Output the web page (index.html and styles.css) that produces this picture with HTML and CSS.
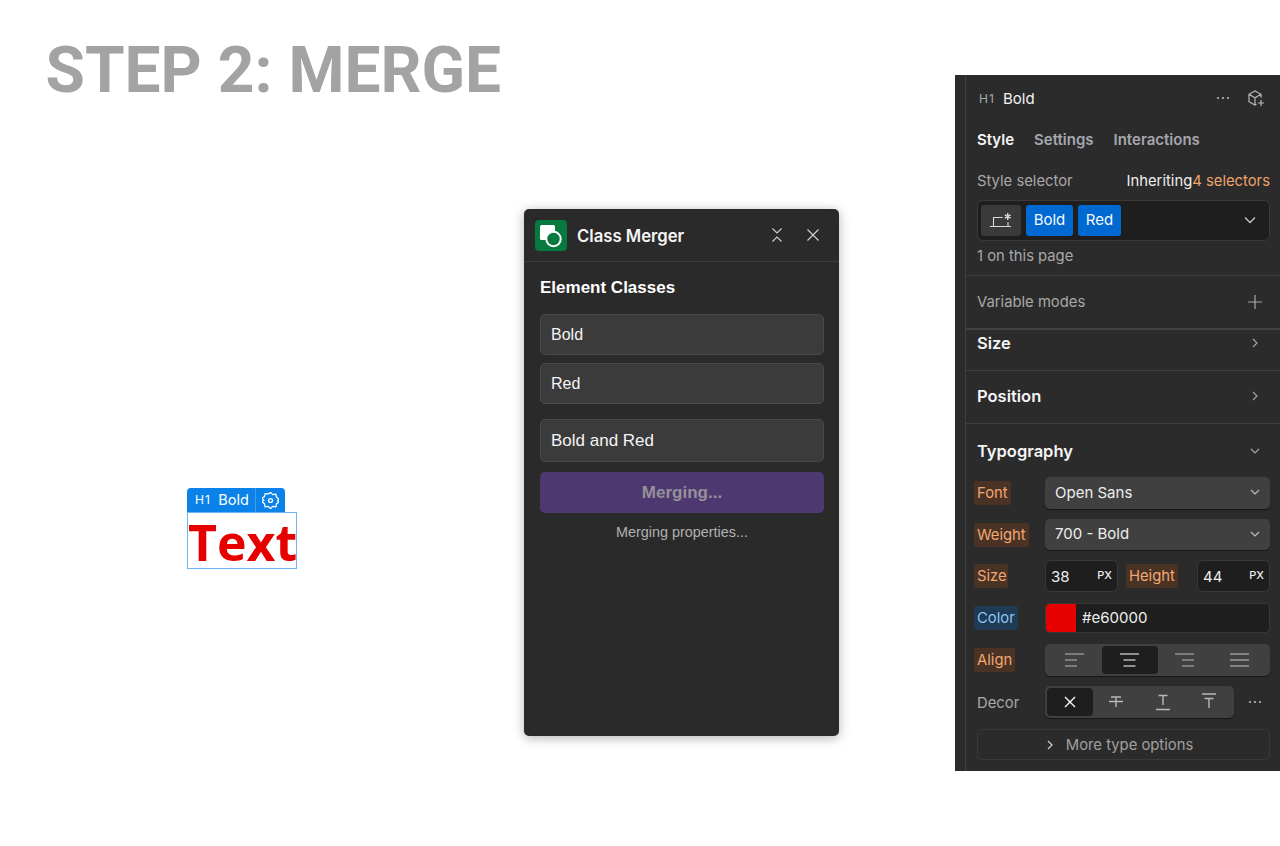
FILE: index.html
```html
<!DOCTYPE html>
<html lang="en">
<head>
<meta charset="utf-8">
<title>Step 2: Merge</title>
<link rel="stylesheet" href="styles.css">
</head>
<body>
<h1 class="title">STEP 2: MERGE</h1>

<div class="canvas-el">
  <div class="el-tag">
    <span class="el-tag-name"><span class="el-h1">H1</span><span>Bold</span></span>
    <span class="el-tag-gear">
      <svg width="17" height="17" viewBox="1.500 1.500 13 13" fill="none" stroke="#fff" stroke-width="1" stroke-linejoin="round"><path d="M8 1.800l1.700 1.700 2.400-.3.500 2.300 2 1.500-1.200 1 1.200 1-2 1.500-.5 2.300-2.400-.3L8 14.200l-1.700-1.700-2.400.3-.5-2.300-2-1.500L3 8 1.400 6.500l2-1.500.5-2.300 2.400.3z"/><circle cx="8" cy="8" r="1.500"/></svg>
    </span>
  </div>
  <div class="el-box">Text</div>
</div>

<section class="plugin">
  <header class="plugin-head">
    <span class="plugin-logo">
      <svg width="32" height="31" viewBox="0 0 32 31"><rect width="32" height="31" rx="4" fill="#067a3e"/><rect x="5" y="5" width="15" height="15" rx="1.500" fill="#fff"/><circle cx="18.500" cy="19" r="7.200" fill="#067a3e" stroke="#fff" stroke-width="2"/></svg>
    </span>
    <span class="plugin-title">Class Merger</span>
    <svg class="plugin-collapse" width="12" height="16" viewBox="0 0 12 16" fill="none" stroke="#d0d0d0" stroke-width="1.100"><path d="M1.500 1.500 6 6l4.500-4.500M1.500 14.500 6 10l4.500 4.500"/></svg>
    <svg class="plugin-close" width="14" height="14" viewBox="0 0 14 14" fill="none" stroke="#d0d0d0" stroke-width="1.200"><path d="M1.500 1.500l11 11M12.500 1.500l-11 11"/></svg>
  </header>
  <div class="plugin-body">
    <h2 class="plugin-h">Element Classes</h2>
    <div class="plugin-field">Bold</div>
    <div class="plugin-field plugin-field-red">Red</div>
    <div class="plugin-field plugin-field-name">Bold and Red</div>
    <button class="plugin-btn">Merging...</button>
    <p class="plugin-status">Merging properties...</p>
  </div>
</section>

<aside class="panel">
  <div class="panel-inner">
    <div class="p-head">
      <span class="p-h1">H1</span>
      <span class="p-name">Bold</span>
      <svg class="p-dots" width="14" height="4" viewBox="0 0 14 4" fill="#b8b8b8"><circle cx="2" cy="2" r="1.100"/><circle cx="7" cy="2" r="1.100"/><circle cx="12" cy="2" r="1.100"/></svg>
      <svg class="p-cube" width="18" height="18" viewBox="0 0 18 18" fill="none" stroke="#b8b8b8" stroke-width="1.200"><path d="M9.500 15.300 8 16 2 12.700V5.300L8 2l6 3.300v3.500M2 5.300 8 8.700l6-3.400M8 8.700V16M14 11v6M11 14h6"/></svg>
    </div>
    <nav class="p-tabs"><span class="tab tab-on">Style</span><span class="tab">Settings</span><span class="tab">Interactions</span></nav>
    <div class="p-sel-label"><span>Style selector</span><span class="p-inherit">Inheriting<em>4 selectors</em></span></div>
    <div class="p-sel">
      <span class="chip-state">
        <svg width="26" height="18" viewBox="0 0 24 18" fill="none" stroke="#d8d8d8" stroke-width="1.100"><path d="M1 15.500h21M4.500 15.500V6.500h9M19 11v4.500"/><path d="M18.700 2v7M15.800 3.800l5.800 3.400M21.600 3.800l-5.800 3.400" stroke-width="1.400"/></svg>
      </span>
      <span class="chip">Bold</span>
      <span class="chip chip-red">Red</span>
      <svg class="p-sel-caret" width="12" height="8" viewBox="0 0 12 8" fill="none" stroke="#c8c8c8" stroke-width="1.300"><path d="M1 1.500 6 6.500l5-5"/></svg>
    </div>
    <div class="p-count">1 on this page</div>
    <div class="p-modes">
      <span>Variable modes</span>
      <svg width="16" height="16" viewBox="0 0 16 16" fill="none" stroke="#a8a8a8" stroke-width="1.200"><path d="M8 1v14M1 8h14"/></svg>
    </div>
    <div class="p-sect p-sect-size"><span>Size</span><svg width="6" height="10" viewBox="0 0 6 10" fill="none" stroke="#a8a8a8" stroke-width="1.100"><path d="M1 1l4 4-4 4"/></svg></div>
    <div class="p-sect p-sect-pos"><span>Position</span><svg width="6" height="10" viewBox="0 0 6 10" fill="none" stroke="#a8a8a8" stroke-width="1.100"><path d="M1 1l4 4-4 4"/></svg></div>
    <div class="p-sect p-sect-typo"><span>Typography</span><svg width="10" height="6" viewBox="0 0 10 6" fill="none" stroke="#a8a8a8" stroke-width="1.100"><path d="M1 1l4 4 4-4"/></svg></div>

    <div class="rows">
      <div class="row row-font">
        <span class="lbl lbl-o lbl-first">Font</span>
        <div class="select">Open Sans<svg width="10" height="6" viewBox="0 0 10 6" fill="none" stroke="#c0c0c0" stroke-width="1.100"><path d="M1 1l4 4 4-4"/></svg></div>
      </div>
      <div class="row row-weight">
        <span class="lbl lbl-o lbl-first">Weight</span>
        <div class="select">700 - Bold<svg width="10" height="6" viewBox="0 0 10 6" fill="none" stroke="#c0c0c0" stroke-width="1.100"><path d="M1 1l4 4 4-4"/></svg></div>
      </div>
      <div class="row row-size">
        <span class="lbl lbl-o lbl-size">Size</span>
        <div class="num num-size"><span>38</span><small>PX</small></div>
        <span class="lbl lbl-o lbl-height">Height</span>
        <div class="num"><span>44</span><small>PX</small></div>
      </div>
      <div class="row row-color">
        <span class="lbl lbl-b lbl-first">Color</span>
        <div class="color"><span class="swatch"></span><span class="hex">#e60000</span></div>
      </div>
      <div class="row row-align">
        <span class="lbl lbl-o lbl-first">Align</span>
        <div class="seg seg-align">
          <span class="seg-i"><svg width="20" height="14" viewBox="0 0 20 14" stroke="#b8b8b8" stroke-width="1.200"><path d="M0 1h19M0 7h12M0 13h12"/></svg></span>
          <span class="seg-i seg-on"><svg width="20" height="14" viewBox="0 0 20 14" stroke="#fff" stroke-width="1.200"><path d="M0 1h19M3.500 7h12M3.500 13h12"/></svg></span>
          <span class="seg-i"><svg width="20" height="14" viewBox="0 0 20 14" stroke="#b8b8b8" stroke-width="1.200"><path d="M0 1h19M7 7h12M7 13h12"/></svg></span>
          <span class="seg-i"><svg width="20" height="14" viewBox="0 0 20 14" stroke="#c8c8c8" stroke-width="1.200"><path d="M0 1h19M0 7h19M0 13h19"/></svg></span>
        </div>
      </div>
      <div class="row row-decor">
        <span class="lbl lbl-first">Decor</span>
        <div class="seg seg-decor">
          <span class="seg-i seg-on"><svg width="12" height="12" viewBox="0 0 12 12" fill="none" stroke="#fff" stroke-width="1.300"><path d="M1 1l10 10M11 1 1 11"/></svg></span>
          <span class="seg-i"><svg width="16" height="14" viewBox="0 0 16 14" fill="none" stroke="#b8b8b8" stroke-width="1.400"><path d="M3 2h10M1 6.500h14M8 2v10"/></svg></span>
          <span class="seg-i"><svg width="16" height="18" viewBox="0 0 16 18" fill="none" stroke="#b8b8b8" stroke-width="1.400"><path d="M3.500 2.500h9M8 2.500V12M1 16.500h14"/></svg></span>
          <span class="seg-i"><svg width="16" height="18" viewBox="0 0 16 18" fill="none" stroke="#b8b8b8" stroke-width="1.400"><path d="M1 1h14M3.500 5.500h9M8 5.500V15"/></svg></span>
        </div>
        <svg class="decor-dots" width="14" height="4" viewBox="0 0 14 4" fill="#b8b8b8"><circle cx="2" cy="2" r="1.100"/><circle cx="7" cy="2" r="1.100"/><circle cx="12" cy="2" r="1.100"/></svg>
      </div>
      <div class="more"><svg width="6" height="10" viewBox="0 0 6 10" fill="none" stroke="#d0d0d0" stroke-width="1.200"><path d="M1 1l4 4-4 4"/></svg><span>More type options</span></div>
    </div>
  </div>
</aside>
</body>
</html>
```
FILE: styles.css
```css
* { box-sizing: border-box; }
html, body { margin: 0; padding: 0; }
body { width: 1280px; height: 846px; background: #fff; position: relative; overflow: hidden; font-family: "Inter", "Liberation Sans", sans-serif; }

.title { position: absolute; left: 45.500px; top: 33px; margin: 0; font: 700 64px/76px "Roboto", sans-serif; color: #a3a3a3; white-space: nowrap; }

.canvas-el { position: absolute; left: 187px; top: 488px; width: 110px; }
.el-tag { display: flex; width: 98px; height: 24px; background: #0a82ea; border-radius: 4px 4px 0 0; color: #fff; font: 400 14.500px/22px "Inter", sans-serif; }
.el-tag-name { display: flex; align-items: center; gap: 7px; padding-left: 8px; width: 69px; border-right: 1px solid #3f9df0; }
.el-h1 { font-size: 12px; letter-spacing: 1.200px; }
.el-tag-gear { flex: 1; display: flex; align-items: center; justify-content: center; }
.el-box { height: 57px; padding-top: 6px; border: 1px solid #6db4f5; color: #e60000; font: 700 50px/46px "Open Sans", sans-serif; text-align: center; white-space: nowrap; }

.plugin { position: absolute; left: 524px; top: 209px; width: 315px; height: 527px; background: #2a2a2a; border-radius: 5px; box-shadow: 0 2px 12px rgba(0,0,0,.3); font-family: "Liberation Sans", sans-serif; color: #f5f5f5; }
.plugin-head { display: flex; align-items: center; height: 53px; padding: 0 19px 0 11px; border-bottom: 1px solid #3c3c3c; }
.plugin-logo { display: flex; margin-right: 10px; }
.plugin-title { font: 600 16.700px/20px "Inter", "Liberation Sans", sans-serif; flex: 1; padding-top: 2px; }
.plugin-collapse { margin-right: 23px; }
.plugin-body { padding: 16px 15px 0 16px; }
.plugin-h { margin: 0 0 16px; font-size: 17px; line-height: 20px; font-weight: 700; color: #fff; }
.plugin-field { height: 41px; padding: 0 10px; background: #3b3b3b; border: 1px solid #4a4a4a; border-radius: 5px; font-size: 16px; line-height: 39px; color: #f4f4f4; margin-bottom: 8px; }
.plugin-field-red { margin-bottom: 15px; }
.plugin-field-name { height: 43px; font-size: 17px; line-height: 41px; margin-bottom: 10px; }
.plugin-btn { display: block; width: 100%; height: 41px; border: 0; border-radius: 5px; background: #4d3870; color: #969198; font: 700 17px/41px "Liberation Sans", sans-serif; padding: 0; }
.plugin-status { margin: 11px 0 0; text-align: center; font-size: 14.400px; line-height: 16px; color: #b0b0b0; }

.panel { position: absolute; left: 955px; top: 75px; width: 325px; height: 696px; background: #2b2b2b; padding-left: 10px; color: #bdbdbd; font-size: 14.800px; }
.panel-inner { height: 100%; border-left: 1px solid #3f3f3f; }
.p-head { display: flex; align-items: center; height: 45px; padding: 1px 15px 0 13px; }
.p-h1 { font-size: 12px; letter-spacing: 1.200px; color: #a8a8a8; width: 24px; }
.p-name { flex: 1; color: #f2f2f2; font-size: 15px; }
.p-dots { margin-right: 17px; }
.p-tabs { display: flex; gap: 20px; height: 36px; align-items: center; padding: 2px 0 0 11px; font-size: 15px; font-weight: 600; color: #a6a6ae; }
.tab-on { color: #f5f5f5; }
.p-sel-label { display: flex; justify-content: space-between; align-items: center; height: 24px; margin-top: 12px; padding: 2px 10px 0 11px; color: #a8a8a8; }
.p-inherit { color: #eee; font-size: 14.800px; }
.p-inherit em { font-style: normal; color: #f0a36b; }
.p-sel { display: flex; align-items: center; gap: 5px; margin: 8px 10px 0 11px; height: 41px; padding: 0 4px 1px 3px; background: #1e1e1e; border: 1px solid #3a3a3a; border-radius: 6px; }
.chip-state { display: flex; align-items: center; justify-content: center; width: 40px; height: 31px; background: #3a3a3a; border-radius: 3px; }
.chip { width: 47px; height: 31px; background: #0069d1; border-radius: 3px; color: #f4f8ff; text-align: center; line-height: 30px; font-size: 15px; }
.chip-red { width: 43px; }
.p-sel-caret { margin-left: auto; margin-right: 9px; }
.p-count { height: 35px; line-height: 30px; padding-left: 11px; color: #a8a8a8; border-bottom: 1px solid #3f3f3f; }
.p-modes { display: flex; align-items: center; justify-content: space-between; height: 54px; padding: 0 17px 1px 11px; color: #a8a8a8; border-bottom: 2px solid #414141; }
.p-sect { display: flex; align-items: center; justify-content: space-between; padding: 0 22px 0 11px; font-size: 16.500px; font-weight: 600; color: #f5f5f5; }
.p-sect-size { height: 41px; padding-bottom: 14px; border-bottom: 1px solid #3f3f3f; }
.p-sect-pos { height: 53px; padding-bottom: 2px; border-bottom: 1px solid #3f3f3f; }
.p-sect-typo { height: 53px; padding-right: 20px; }

.rows { padding: 0 10px 0 8px; }
.row { display: flex; align-items: center; }
.row-font { height: 32px; }
.row-weight { height: 31px; margin-top: 10px; }
.row-size { height: 32px; margin-top: 10px; }
.row-color { height: 30px; margin-top: 11px; }
.row-align { height: 32px; margin-top: 11px; }
.row-decor { height: 32px; margin-top: 10px; }
.lbl { display: inline-block; height: 24px; padding: 0 3px; line-height: 24px; border-radius: 2px; color: #a8a8a8; }
.lbl-o { background: #4a3225; color: #f2a873; }
.lbl-b { background: #1f3a55; color: #8ec3f2; }
.lbl-first { margin-right: auto; }
.row-decor .lbl-first { width: 71px; margin-right: 0; padding-top: 1px; }
.select { display: flex; align-items: center; justify-content: space-between; width: 225px; height: 100%; padding: 0 10px 2px; background: #404040; border-radius: 5px; box-shadow: 0 1px 1px rgba(0,0,0,.5); color: #eee; font-size: 15px; }
.num { display: flex; align-items: center; justify-content: space-between; width: 73px; height: 32px; padding: 0 5px; background: #1e1e1e; border: 1px solid #383838; border-radius: 6px; color: #eee; font-size: 15px; }
.num small { font-size: 11px; font-weight: 500; margin-bottom: 2px; }
.lbl-size { width: 34px; }
.num-size { margin-left: 37px; }
.lbl-height { width: 52px; margin-left: 8px; margin-right: 19px; }
.color { display: flex; align-items: center; width: 225px; height: 30px; background: #1e1e1e; border: 1px solid #383838; border-radius: 5px; overflow: hidden; color: #eee; font-size: 15px; }
.swatch { width: 30px; height: 100%; background: #e60000; }
.hex { padding: 0 0 1px 6px; }
.seg { display: flex; height: 32px; padding: 2px; background: #404040; border-radius: 5px; box-shadow: 0 1px 1px rgba(0,0,0,.5); }
.seg-align { width: 225px; }
.seg-align .seg-i { flex: 1; }
.seg-decor { width: 189px; margin-right: 14px; }
.seg-decor .seg-i { flex: 1; }
.seg-i { display: flex; align-items: center; justify-content: center; border-radius: 4px; }
.seg-on { background: #1e1e1e; }
.decor-dots { flex: none; }
.more { display: flex; align-items: center; justify-content: center; gap: 13px; height: 31px; margin: 11px 0 0 3px; padding-right: 7px; border: 1px solid #3a3a3a; border-radius: 5px; color: #a0a0a0; }
```
